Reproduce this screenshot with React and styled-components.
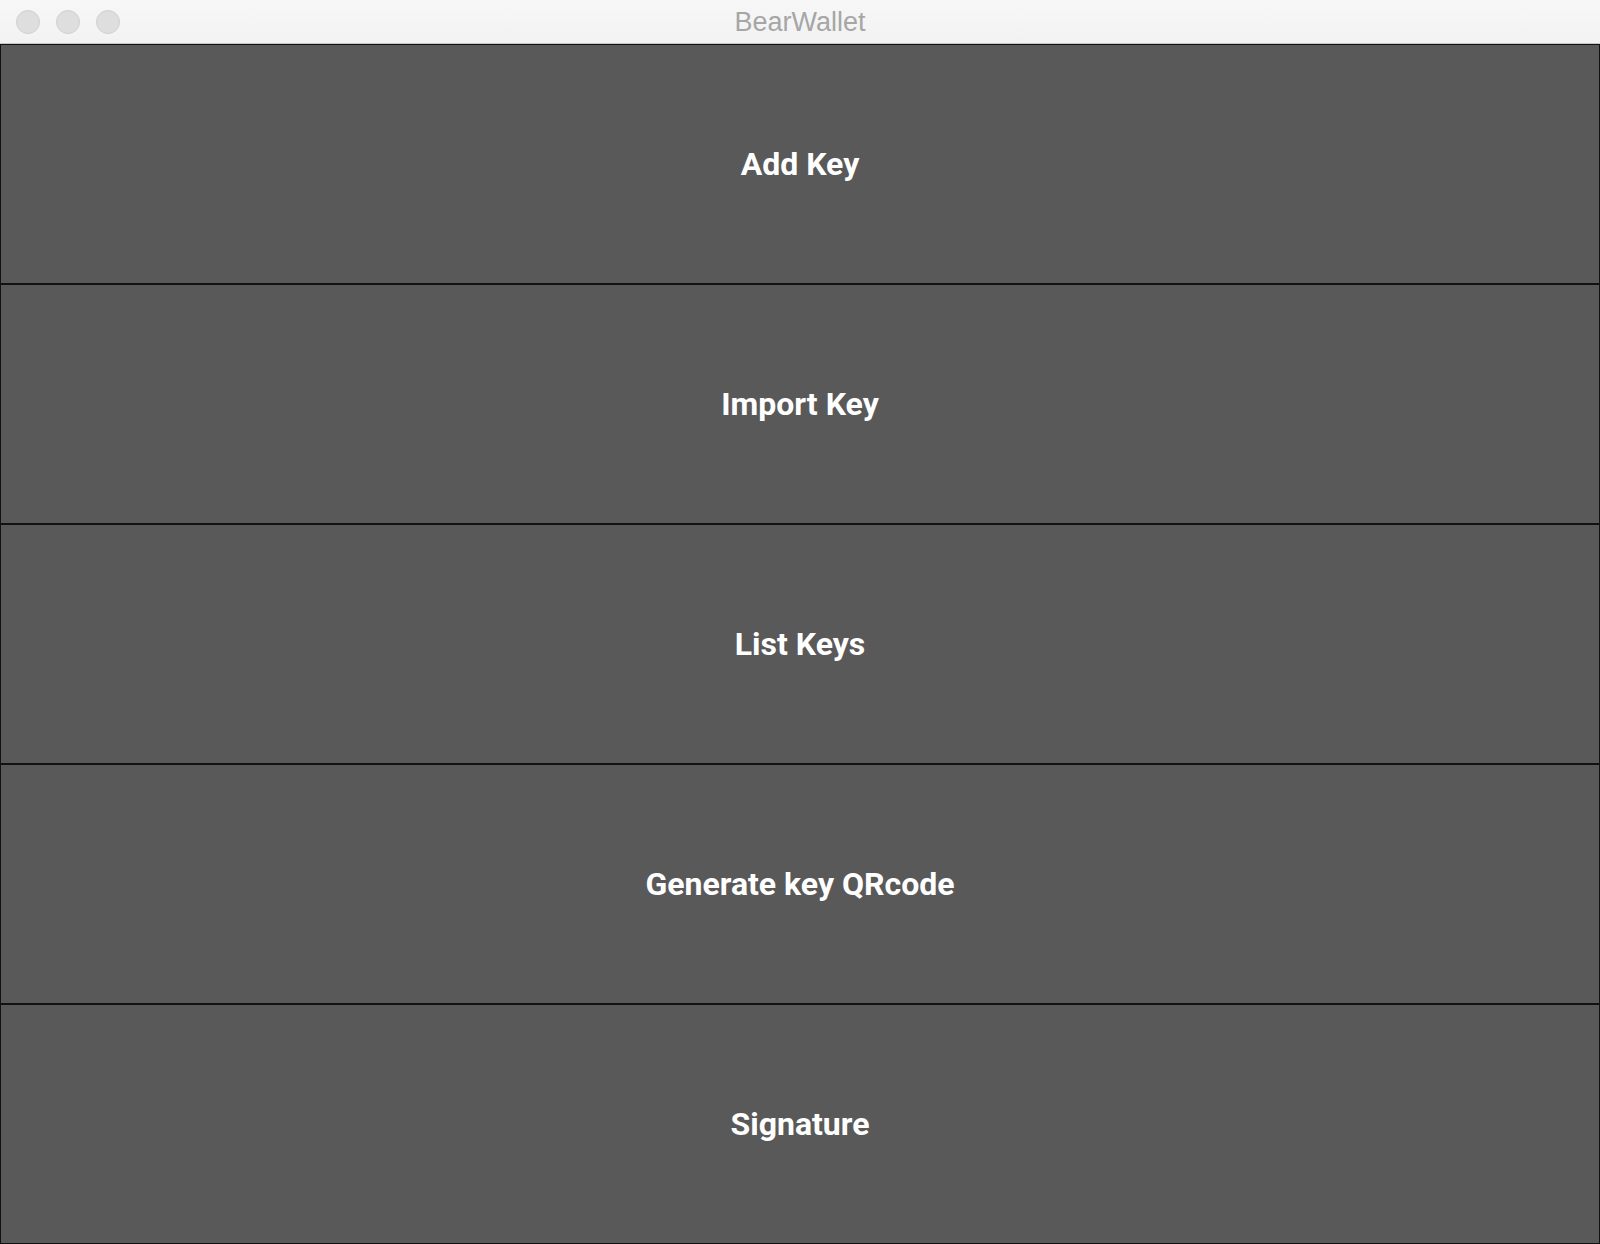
import React from 'react';
import styled, { createGlobalStyle } from 'styled-components';

const Global = createGlobalStyle`
  html, body {
    margin: 0;
    padding: 0;
    background: #ffffff;
  }
  * {
    box-sizing: border-box;
  }
`;

const Window = styled.div`
  width: 1600px;
  height: 1244px;
  display: flex;
  flex-direction: column;
  overflow: hidden;
`;

const TitleBar = styled.div`
  height: 44px;
  flex: none;
  display: flex;
  align-items: center;
  position: relative;
  background: linear-gradient(#f7f7f7, #f2f2f2);
  border-bottom: 1px solid #c8c8c8;
  padding-left: 16px;
`;

const Lights = styled.div`
  display: flex;
  gap: 16px;
`;

const Light = styled.span`
  width: 24px;
  height: 24px;
  border-radius: 50%;
  background: #dedede;
  border: 1px solid #d0d0d0;
`;

const Title = styled.div`
  position: absolute;
  left: 0;
  right: 0;
  top: 2px;
  bottom: 0;
  display: flex;
  align-items: center;
  justify-content: center;
  font-family: "Liberation Sans", Arial, sans-serif;
  font-size: 27px;
  color: #a6a6a6;
  pointer-events: none;
`;

const Menu = styled.div`
  flex: 1;
  display: flex;
  flex-direction: column;
`;

const MenuButton = styled.button`
  height: 240px;
  flex: none;
  width: 100%;
  margin: 0;
  padding: 0;
  background: #595959;
  border: 1px solid #121212;
  color: #ffffff;
  font-family: Roboto, "Noto Sans", sans-serif;
  font-weight: 700;
  font-size: 32px;
  cursor: pointer;
  display: flex;
  align-items: center;
  justify-content: center;
`;

const items = ['Add Key', 'Import Key', 'List Keys', 'Generate key QRcode', 'Signature'];

const App = () => {
  return (
    <Window>
      <Global />
      <TitleBar>
        <Lights>
          <Light />
          <Light />
          <Light />
        </Lights>
        <Title>BearWallet</Title>
      </TitleBar>
      <Menu>
        {items.map(label => (
          <MenuButton key={label}>{label}</MenuButton>
        ))}
      </Menu>
    </Window>
  );
};

export default App;
